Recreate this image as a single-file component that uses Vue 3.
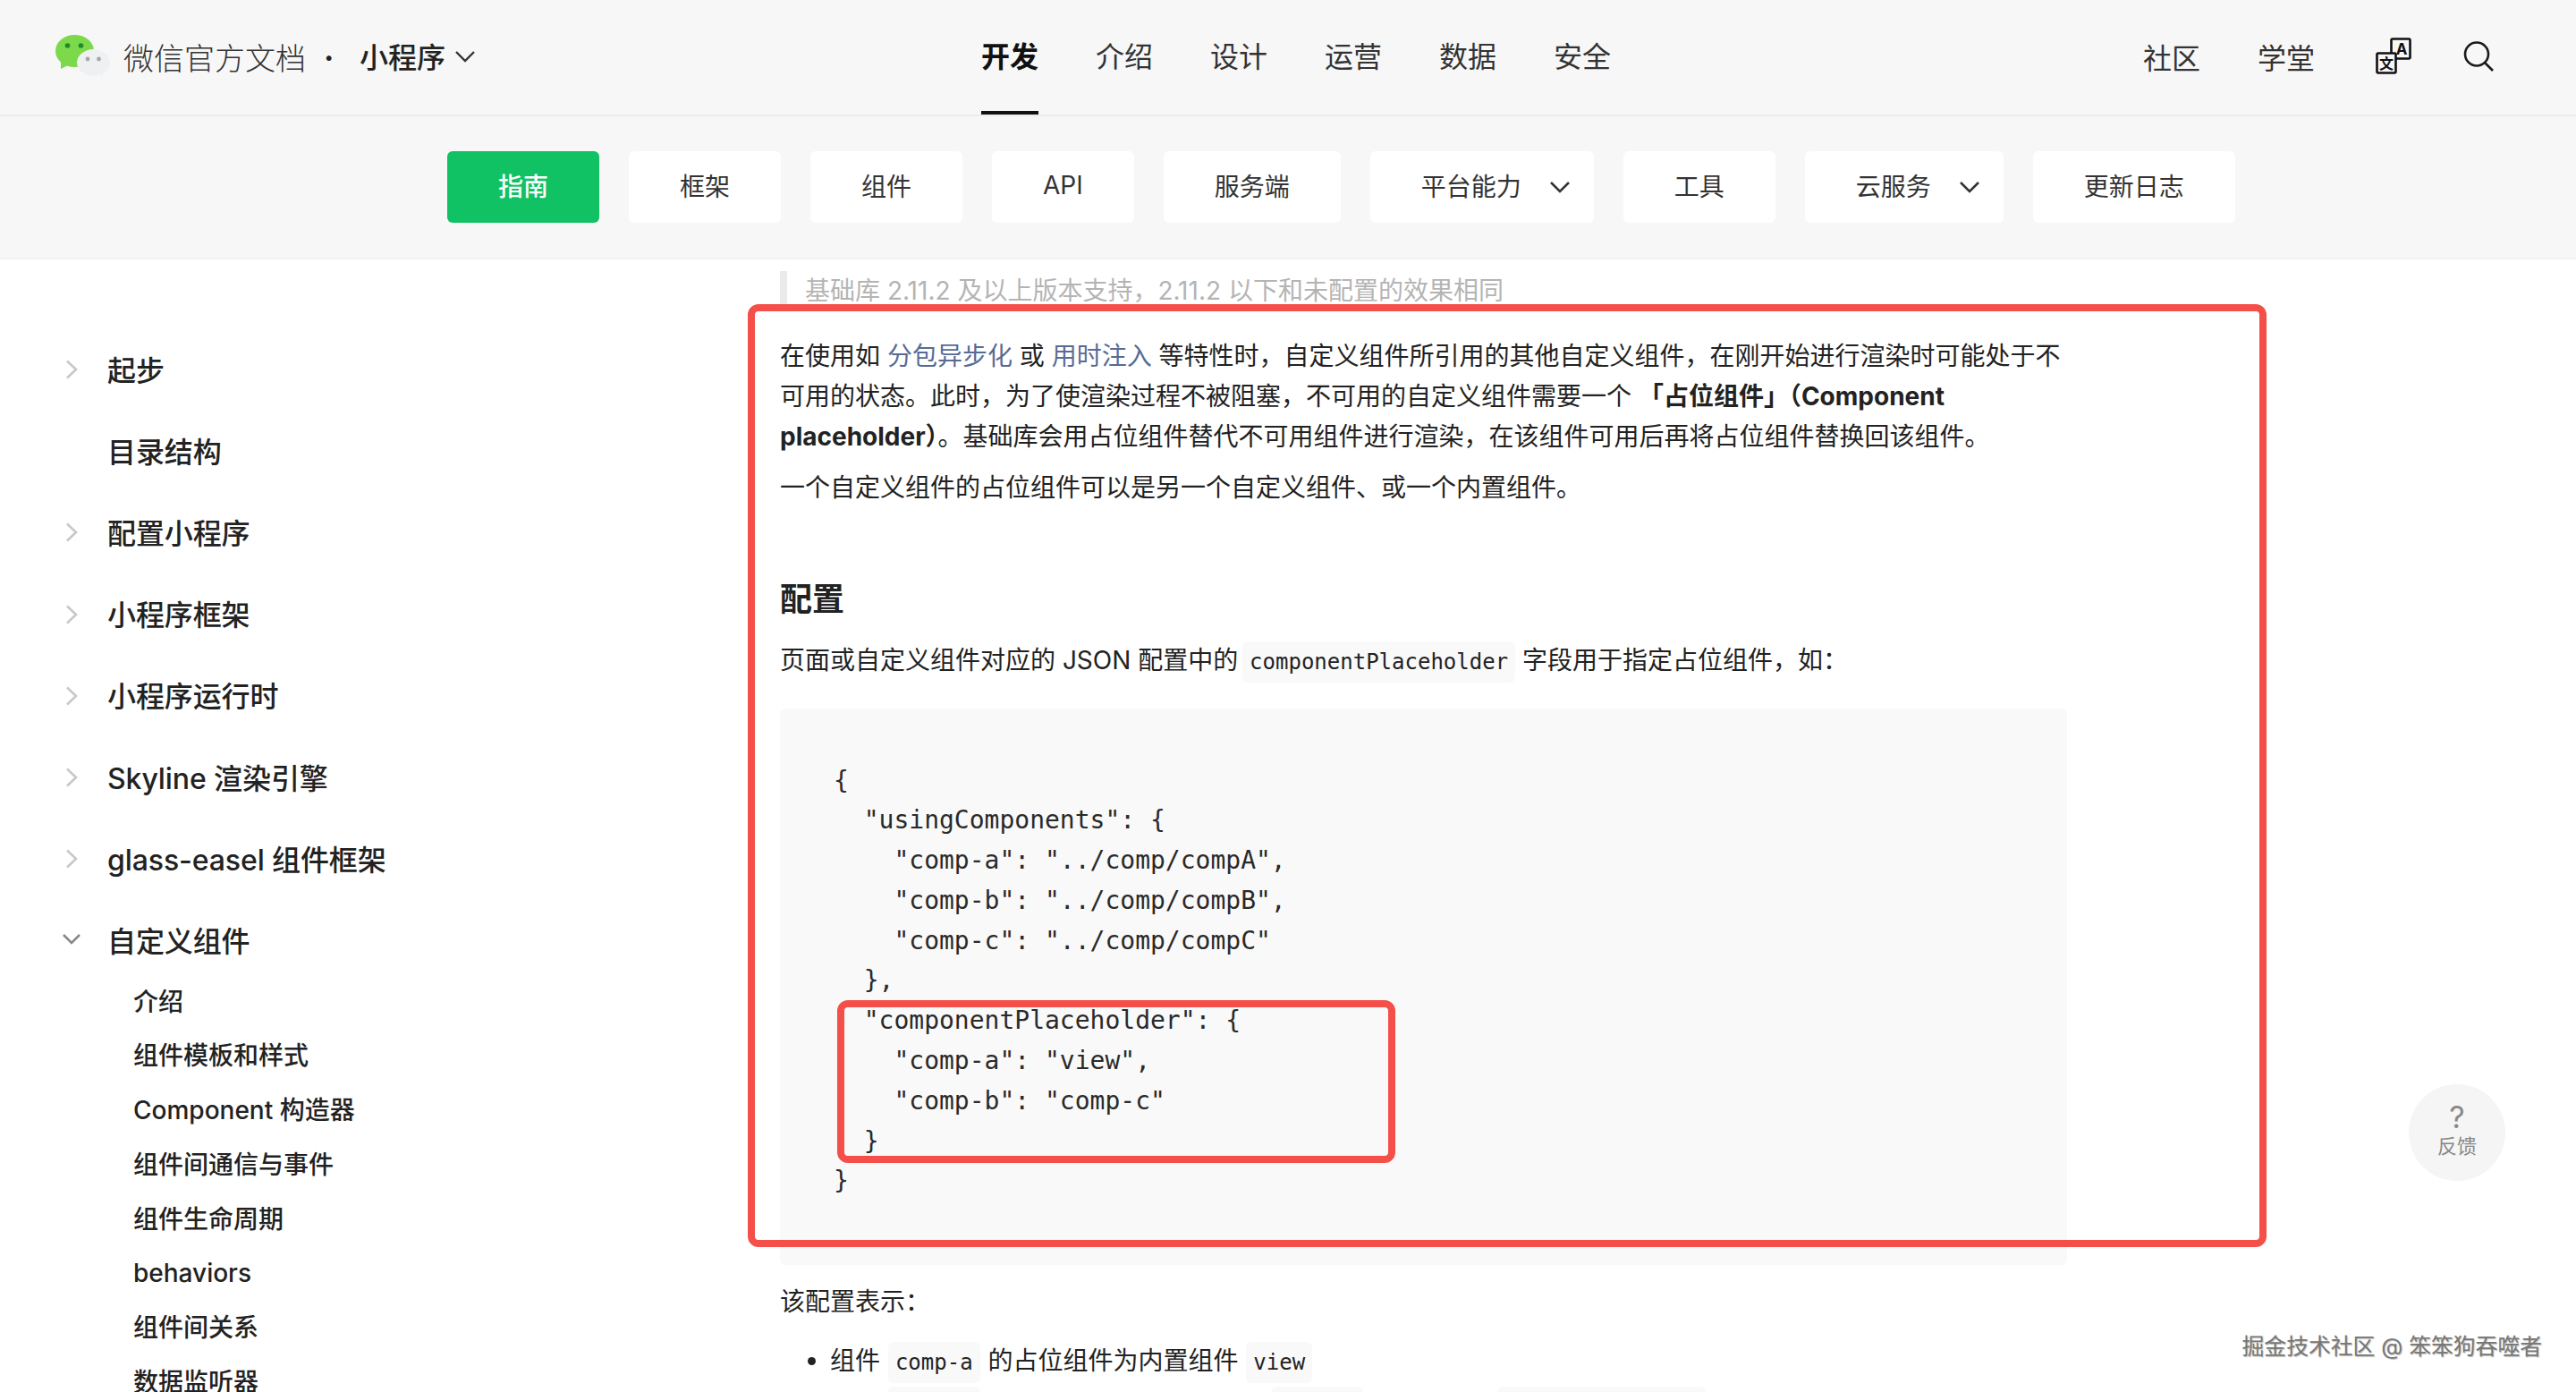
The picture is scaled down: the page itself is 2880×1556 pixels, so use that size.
<script setup>
const topNav = ['开发', '介绍', '设计', '运营', '数据', '安全']
const tabs = [
  { t: '指南', active: true },
  { t: '框架' },
  { t: '组件' },
  { t: 'API' },
  { t: '服务端' },
  { t: '平台能力', arrow: true },
  { t: '工具' },
  { t: '云服务', arrow: true },
  { t: '更新日志' }
]
const side = [
  { t: '起步', a: 'r' },
  { t: '目录结构' },
  { t: '配置小程序', a: 'r' },
  { t: '小程序框架', a: 'r' },
  { t: '小程序运行时', a: 'r' },
  { t: 'Skyline 渲染引擎', a: 'r' },
  { t: 'glass-easel 组件框架', a: 'r' },
  { t: '自定义组件', a: 'd' }
]
const sub = ['介绍', '组件模板和样式', 'Component 构造器', '组件间通信与事件', '组件生命周期', 'behaviors', '组件间关系', '数据监听器']
const code = `{
  "usingComponents": {
    "comp-a": "../comp/compA",
    "comp-b": "../comp/compB",
    "comp-c": "../comp/compC"
  },
  "componentPlaceholder": {
    "comp-a": "view",
    "comp-b": "comp-c"
  }
}`
</script>

<template>
  <div class="page">
    <header class="head">
      <div class="brand">
        <svg class="logo" viewBox="0 0 64 54" width="64" height="54">
          <ellipse cx="23.5" cy="22" rx="21.5" ry="18" fill="#7bd94a"/>
          <path d="M8 32l-0 10 10-5z" fill="#7bd94a"/>
          <circle cx="15.5" cy="16" r="2.8" fill="#1e8a2c"/>
          <circle cx="30.5" cy="16" r="2.8" fill="#1e8a2c"/>
          <ellipse cx="44.5" cy="35" rx="18.5" ry="15" fill="#eff0f2"/>
          <path d="M50 46l5 6 0-9z" fill="#eff0f2"/>
          <circle cx="38" cy="31" r="2.4" fill="#a3a6ab"/>
          <circle cx="50.5" cy="31" r="2.4" fill="#a3a6ab"/>
        </svg>
        <span class="brand-name">微信官方文档</span>
        <span class="brand-dot">·</span>
        <span class="brand-sub">小程序</span>
        <svg class="brand-chev" viewBox="0 0 24 14" width="24" height="14"><path d="M2 2l10 10L22 2" fill="none" stroke="#333" stroke-width="2.4"/></svg>
      </div>
      <nav class="top-nav">
        <a v-for="(n, i) in topNav" :key="n" class="top-item" :class="{ on: i === 0 }">{{ n }}</a>
      </nav>
      <div class="head-right">
        <a class="hr-link">社区</a>
        <a class="hr-link">学堂</a>
        <svg class="tr-icon" viewBox="0 0 40 41" width="40" height="41">
          <rect x="17.5" y="1.5" width="21" height="22" rx="1.5" fill="#f7f7f7" stroke="#111" stroke-width="2.6"/>
          <text x="29" y="19" text-anchor="middle" class="tr-a">A</text>
          <rect x="1.5" y="17.5" width="21" height="22" rx="1.5" fill="#f7f7f7" stroke="#111" stroke-width="2.6"/>
          <text x="12" y="35" text-anchor="middle" class="tr-z">文</text>
        </svg>
        <svg class="search" viewBox="0 0 36 36" width="36" height="36"><circle cx="15" cy="15.5" r="13" fill="none" stroke="#1a1a1a" stroke-width="2.6"/><path d="M24 25l9 9" stroke="#1a1a1a" stroke-width="2.6"/></svg>
      </div>
    </header>

    <div class="tabs">
      <a v-for="t in tabs" :key="t.t" class="tab" :class="{ active: t.active, arrowed: t.arrow }">
        <span>{{ t.t }}</span>
        <svg v-if="t.arrow" viewBox="0 0 24 14" width="24" height="14"><path d="M2 2l10 10L22 2" fill="none" stroke="#333" stroke-width="2.6"/></svg>
      </a>
    </div>

    <div class="body">
      <aside class="side">
        <div v-for="s in side" :key="s.t" class="side-row">
          <svg v-if="s.a === 'r'" class="side-arrow" viewBox="0 0 14 22" width="14" height="22"><path d="M2 1.5l10 9.5-10 9.5" fill="none" stroke="#c8c8c8" stroke-width="2.6"/></svg>
          <svg v-else-if="s.a === 'd'" class="side-arrow-d" viewBox="0 0 22 14" width="22" height="14"><path d="M2 2l9 9 9-9" fill="none" stroke="#888" stroke-width="2.6"/></svg>
          <span class="side-text">{{ s.t }}</span>
        </div>
        <div class="sub-list">
          <div v-for="s in sub" :key="s" class="sub-row">{{ s }}</div>
        </div>
      </aside>

      <main class="main">
        <blockquote class="quote">基础库 2.11.2 及以上版本支持，2.11.2 以下和未配置的效果相同</blockquote>
        <p class="p1">在使用如 <a class="lnk">分包异步化</a> 或 <a class="lnk">用时注入</a> 等特性时，自定义组件所引用的其他自定义组件，在刚开始进行渲染时可能处于不可用的状态。此时，为了使渲染过程不被阻塞，不可用的自定义组件需要一个 <b>「占位组件」（Component placeholder）</b>。基础库会用占位组件替代不可用组件进行渲染，在该组件可用后再将占位组件替换回该组件。</p>
        <p class="p2">一个自定义组件的占位组件可以是另一个自定义组件、或一个内置组件。</p>
        <h2 class="h2">配置</h2>
        <p class="p3">页面或自定义组件对应的 JSON 配置中的 <code class="ic">componentPlaceholder</code> 字段用于指定占位组件，如：</p>
        <div class="block"><pre class="pre">{{ code }}</pre></div>
        <p class="p4">该配置表示：</p>
        <ul class="ul">
          <li>组件 <code class="ic">comp-a</code> 的占位组件为内置组件 <code class="ic">view</code></li>
          <li>组件 <code class="ic">comp-b</code> 的占位组件为自定义组件 <code class="ic">comp-c</code>（其路径在 <code class="ic">usingComponents</code> 中配置）</li>
        </ul>
      </main>
    </div>

    <div class="mark mark-outer"></div>
    <div class="mark mark-inner"></div>

    <div class="feedback">
      <span class="fb-q">?</span>
      <span class="fb-t">反馈</span>
    </div>
    <div class="water">掘金技术社区 @ 笨笨狗吞噬者</div>
  </div>
</template>

<style scoped>
.page {
  position: relative;
  width: 2880px;
  height: 1556px;
  overflow: hidden;
  background: #fff;
  color: #222;
  font-family: "Inter", "Noto Sans CJK SC", sans-serif;
}
.head {
  height: 128px;
  background: #f7f7f7;
  border-bottom: 2px solid #ececec;
  display: flex;
  align-items: center;
  padding: 0 90px 0 60px;
}
.brand { display: flex; align-items: center; width: 1037px; flex: none; height: 128px; }
.logo { margin-top: -4px; }
.brand-name { margin-left: 14px; font-size: 34px; font-weight: 300; color: #333; position: relative; top: -1px; }
.brand-dot { margin-left: 20px; width: 40px; font-size: 34px; font-weight: 700; color: #222; }
.brand-sub { font-size: 32px; font-weight: 500; color: #222; position: relative; top: -2px; }
.brand-chev { margin-left: 10px; margin-top: -2px; }
.top-nav { display: flex; gap: 64px; height: 128px; }
.top-item {
  font-size: 32px;
  line-height: 128px;
  color: #333;
  position: relative;
}
.top-item.on { font-weight: 700; color: #111; }
.top-item.on::after {
  content: "";
  position: absolute;
  left: 0;
  right: 0;
  bottom: 0;
  height: 4px;
  background: #111;
}
.head-right { display: flex; align-items: center; margin-left: auto; gap: 64px; padding-bottom: 2px; }
.hr-link { font-size: 32px; color: #333; }
.tr-icon { margin-left: 4px; margin-top: -2px; }
.tr-a { font-size: 17px; font-weight: 700; font-family: "Inter", sans-serif; fill: #111; }
.tr-z { font-size: 16px; font-weight: 700; fill: #111; font-family: "Noto Sans CJK SC", sans-serif; }
.search { margin-left: -6px; }

.tabs {
  height: 158px;
  background: #f7f7f7;
  border-bottom: 2px solid #f0f0f0;
  display: flex;
  align-items: center;
  gap: 33px;
  padding-left: 500px;
}
.tab {
  height: 80px;
  box-sizing: border-box;
  padding: 0 57px 5px;
  display: flex;
  align-items: center;
  gap: 31px;
  background: #fff;
  border-radius: 6px;
  font-size: 28px;
  color: #333;
}
.tab svg { margin-top: 5px; }
.tab.arrowed { padding-right: 26px; }
.tab.active { background: #10c263; color: #fff; font-weight: 500; }

.body { display: flex; }
.side { width: 872px; flex: none; padding-top: 76px; position: relative; }
.side-row {
  height: 91.2px;
  display: flex;
  align-items: center;
  padding-left: 120px;
  position: relative;
}
.side-text { font-size: 32px; font-weight: 500; color: #222; letter-spacing: -0.1px; }
.side-arrow { position: absolute; left: 73px; top: 36px; }
.side-arrow-d { position: absolute; left: 69px; top: 39px; }
.sub-list { margin-top: -6px; }
.sub-row {
  height: 60.8px;
  line-height: 60.8px;
  padding-left: 149px;
  font-size: 28px;
  font-weight: 500;
  color: #222;
}
.main { width: 1439px; flex: none; padding-top: 13px; font-size: 28px; line-height: 45px; color: #222; }
.quote {
  margin: 0;
  border-left: 8px solid #eaeaea;
  padding-left: 20px;
  color: #b4b4b4;
}
.p1 { margin: 28px 0 0; }
.lnk { color: #576b95; }
.p2 { margin: 12px 0 0; }
.h2 { margin: 72px 0 0; font-size: 36px; line-height: 60px; font-weight: 700; color: #222; }
.p3 { margin: 16px 0 0; }
.p3 .ic { margin-left: -3px; }
.ic {
  font-family: "DejaVu Sans Mono", monospace;
  font-size: 24px;
  background: #f9f9f9;
  padding: 9px 8px;
  border-radius: 6px;
}
.block {
  margin-top: 29px;
  height: 622px;
  box-sizing: border-box;
  padding: 58.5px 60px 0;
  background: #f9f9f9;
  border-radius: 6px;
}
.pre {
  margin: 0;
  font-family: "DejaVu Sans Mono", monospace;
  font-size: 28px;
  line-height: 44.8px;
  color: #2a2a2a;
}
.p4 { margin: 19px 0 0; }
.ul { margin: 21px 0 0; padding-left: 56px; }
.ul .ic { margin: 0 1px; }
.ul li + li { margin-top: 3px; }
.mark {
  position: absolute;
  box-sizing: border-box;
  border: 8px solid #f44f48;
  border-radius: 12px;
  pointer-events: none;
}
.mark-outer { left: 836px; top: 340px; width: 1698px; height: 1054px; }
.mark-inner { left: 936px; top: 1118px; width: 624px; height: 182px; }
.feedback {
  position: absolute;
  left: 2693px;
  top: 1212px;
  width: 108px;
  height: 108px;
  border-radius: 50%;
  background: #f5f5f5;
  display: flex;
  flex-direction: column;
  align-items: center;
  justify-content: center;
  color: #888;
}
.fb-q { font-size: 34px; line-height: 36px; margin-top: -6px; }
.fb-t { font-size: 22px; line-height: 28px; }
.water {
  position: absolute;
  right: 38px;
  top: 1488px;
  font-size: 24.8px;
  line-height: 34px;
  color: #777;
  text-shadow: 1px 1px 1px #bbb;
}
</style>
